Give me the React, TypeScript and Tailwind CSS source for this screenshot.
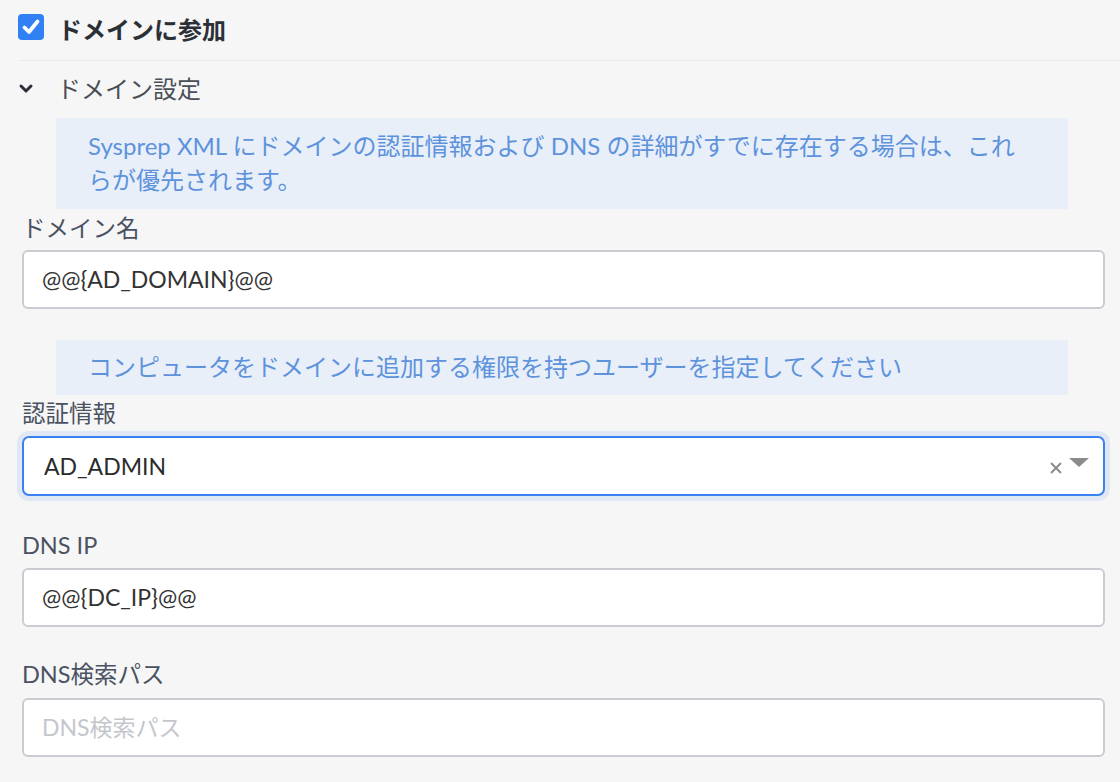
import React from "react";

const font = { fontFamily: '"Lato", "Noto Sans CJK JP", sans-serif' };

function Label({ text, className }: { text: string; className?: string }) {
    return (
        <div className={`text-[23.5px] leading-[30px] text-[#4a5262] ${className ?? ""}`}>
            {text}
        </div>
    );
}

function TextInput({ value, placeholder }: { value?: string; placeholder?: string }) {
    return (
        <div className="h-[59px] bg-white border-2 border-[#c9cdd2] rounded-[6px] flex items-center px-[18px] text-[23px]">
            {value ? (
                <span className="text-[#333333]">{value}</span>
            ) : (
                <span className="text-[#c3c7cc]">{placeholder}</span>
            )}
        </div>
    );
}

function InfoBox({ lines, className }: { lines: string[]; className?: string }) {
    return (
        <div className={`ml-[34px] w-[1012px] bg-[#e8eff9] pl-[32px] text-[#5e93dc] text-[24px] leading-[34px] ${className ?? ""}`}>
            {lines.map((l, i) => (
                <div key={i} className="whitespace-nowrap">{l}</div>
            ))}
        </div>
    );
}

export default function App() {
    return (
        <div className="w-full h-[782px] bg-[#f6f6f6] overflow-hidden" style={font}>
            <div className="pl-[18px]">
                {/* join domain */}
                <div className="flex items-center h-[26px] mt-[14px]">
                    <div className="w-[26px] h-[26px] rounded-[4px] bg-[#3180f4] flex items-center justify-center">
                        <svg width="20" height="20" viewBox="0 0 20 20">
                            <polyline points="3.5,10.5 8,15 16.5,4.5" fill="none" stroke="white" strokeWidth="3.8" strokeLinecap="round" strokeLinejoin="round" />
                        </svg>
                    </div>
                    <span className="ml-[14px] text-[24px] font-bold text-[#2b2f36] mt-[5px]">ドメインに参加</span>
                </div>
                <div className="h-px bg-[#ebebeb] mt-[20px]" />

                {/* domain settings */}
                <div className="flex items-center h-[30px] mt-[13px]">
                    <svg width="16" height="12" viewBox="0 0 16 12">
                        <polyline points="3,3 8,8 13,3" fill="none" stroke="#2b2f36" strokeWidth="3" strokeLinecap="round" strokeLinejoin="round" />
                    </svg>
                    <span className="ml-[23px] text-[24px] text-[#4a4f57]">ドメイン設定</span>
                </div>
            </div>

            <div className="pl-[22px] pr-[15px]">
                <InfoBox
                    className="mt-[14px] pt-[11px] pb-[12px]"
                    lines={[
                        "Sysprep XML にドメインの認証情報および DNS の詳細がすでに存在する場合は、これ",
                        "らが優先されます。",
                    ]}
                />

                <Label text="ドメイン名" className="mt-[4px] mb-[7px]" />
                <TextInput value="@@{AD_DOMAIN}@@" />

                <InfoBox
                    className="mt-[31px] pt-[10px] pb-[11px]"
                    lines={["コンピュータをドメインに追加する権限を持つユーザーを指定してください"]}
                />

                <Label text="認証情報" className="mt-[3px] mb-[8px]" />
                <div className="h-[60px] bg-white border-2 border-[#3a82f2] rounded-[7px] shadow-[0_0_0_5px_#e1e8f5] flex items-center pl-[20px] pr-[14px] text-[23px]">
                    <span className="flex-1 text-[#2b2b2b]">AD_ADMIN</span>
                    <svg width="14" height="14" viewBox="0 0 14 14" className="mt-[4px]">
                        <path d="M2 2 L12 12 M12 2 L2 12" stroke="#8c8c8c" strokeWidth="2" />
                    </svg>
                    <svg width="20" height="10" viewBox="0 0 20 10" className="ml-[6px] mb-[6px]">
                        <polygon points="0,0 20,0 10,9" fill="#8c8c8c" />
                    </svg>
                </div>

                <Label text="DNS IP" className="mt-[34px] mb-[8px] text-[#3f4857]" />
                <TextInput value="@@{DC_IP}@@" />

                <Label text="DNS検索パス" className="mt-[32px] mb-[9px] text-[#3f4857]" />
                <TextInput placeholder="DNS検索パス" />
            </div>
        </div>
    );
}
